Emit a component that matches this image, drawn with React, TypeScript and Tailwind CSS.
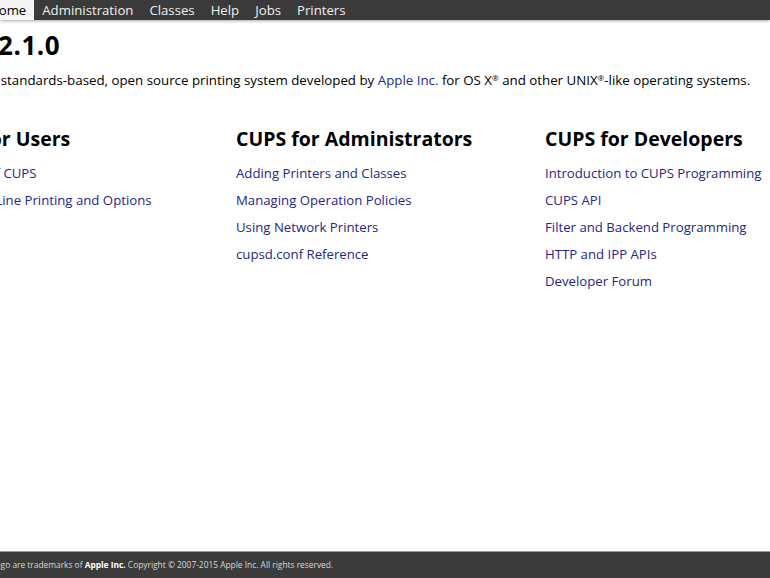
const NAV = ["Administration", "Classes", "Help", "Jobs", "Printers"];

const COLUMNS = [
  {
    title: "CUPS for Users",
    links: ["Overview of CUPS", "Command-Line Printing and Options"],
  },
  {
    title: "CUPS for Administrators",
    links: [
      "Adding Printers and Classes",
      "Managing Operation Policies",
      "Using Network Printers",
      "cupsd.conf Reference",
    ],
  },
  {
    title: "CUPS for Developers",
    links: [
      "Introduction to CUPS Programming",
      "CUPS API",
      "Filter and Backend Programming",
      "HTTP and IPP APIs",
      "Developer Forum",
    ],
  },
];

export default function App() {
  return (
    <div className="w-[770px] h-[578px] overflow-hidden flex flex-col bg-white text-black font-['Open_Sans',sans-serif]">
      {/* top navigation */}
      <div className="h-[20px] shrink-0 bg-[#3a3a3a] flex items-stretch text-[13.2px] leading-[20px] shadow-[0_1px_3px_rgba(0,0,0,0.35)] whitespace-nowrap">
        <div className="-ml-[19px] pl-[8px] pr-[8px] bg-[#f5f5f5] text-black">Home</div>
        {NAV.map((n) => (
          <div key={n} className="px-[8px] text-[#f0f0f0]">{n}</div>
        ))}
      </div>

      {/* main */}
      <div className="flex-1 -ml-[73px] whitespace-nowrap">
        <h1 className="mt-[8px] -ml-[5px] text-[26px] tracking-[0.5px] font-bold leading-[34px]">CUPS 2.1.0</h1>
        <p className="mt-[8px] text-[13.3px] leading-[20px]">
          CUPS is the standards-based, open source printing system developed by{" "}
          <a className="text-[#262688]">Apple Inc.</a> for OS X<sup className="text-[8px]">®</sup> and other UNIX
          <sup className="text-[8px]">®</sup>-like operating systems.
        </p>
        <div className="mt-[34px] flex">
          {COLUMNS.map((c) => (
            <div key={c.title} className="w-[309px] shrink-0">
              <h2 className="text-[19.5px] font-bold leading-[30px]">{c.title}</h2>
              <ul className="mt-[6px] flex flex-col">
                {c.links.map((l) => (
                  <li key={l} className="text-[13.2px] leading-[27px] text-[#262688]">{l}</li>
                ))}
              </ul>
            </div>
          ))}
        </div>
      </div>

      {/* footer */}
      <div className="h-[27px] shrink-0 bg-[#3b3b3b] border-t border-[#999] flex items-center -ml-[85px] pt-[1px] text-[8.4px] text-[#d8d8d8] whitespace-nowrap">
        CUPS and the CUPS logo are trademarks of&nbsp;<b className="text-white">Apple Inc.</b>&nbsp;Copyright © 2007-2015 Apple Inc. All rights reserved.
      </div>
    </div>
  );
}
